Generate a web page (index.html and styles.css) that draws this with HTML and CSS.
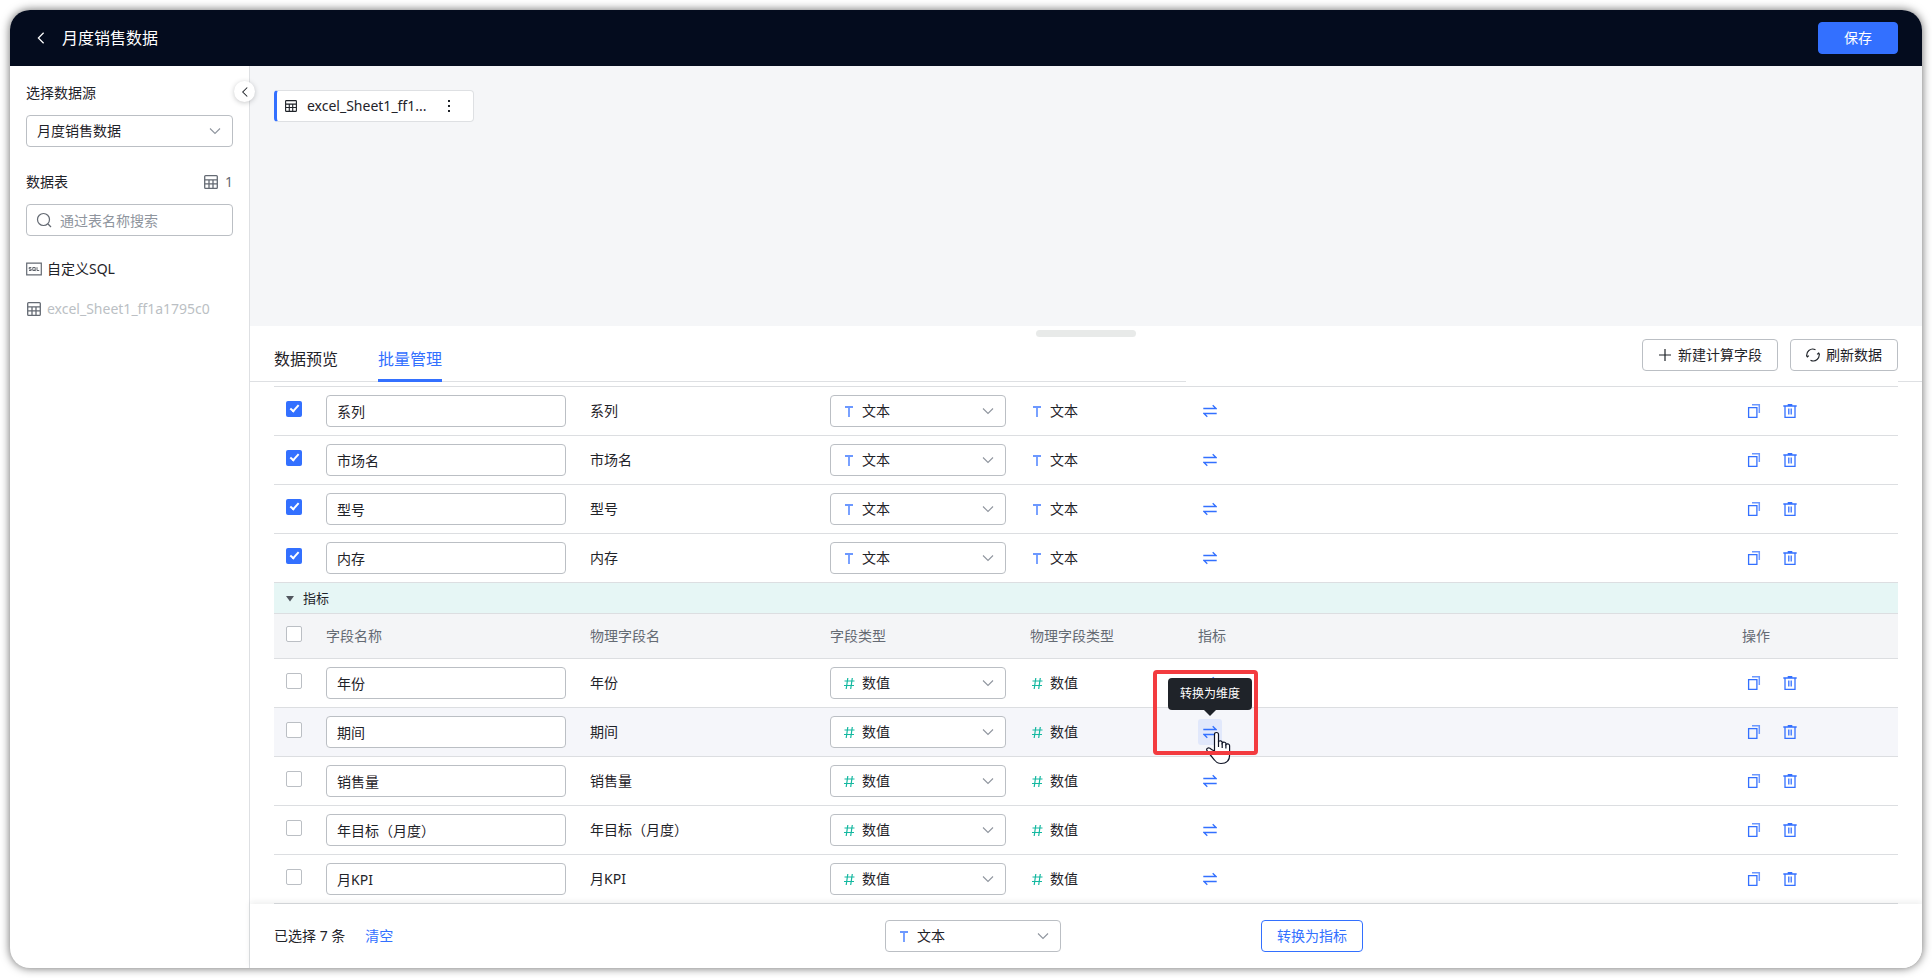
FILE: index.html
```html
<!DOCTYPE html>
<html lang="zh-CN">
<head>
<meta charset="utf-8">
<title>月度销售数据</title>
<link rel="stylesheet" href="styles.css">
</head>
<body>
<svg class="sprite" aria-hidden="true">
  <symbol id="i-down" viewBox="0 0 12 12"><path d="M1 3.5 6 8.5 11 3.5" fill="none" stroke="currentColor" stroke-width="1.1"/></symbol>
  <symbol id="i-left" viewBox="0 0 16 16"><path d="M11 2 5 8l6 6" fill="none" stroke="currentColor" stroke-width="1.4"/></symbol>
  <symbol id="i-table" viewBox="0 0 14 14"><path d="M1.6.7h10.8q.9 0 .9.9v10.8q0 .9-.9.9H1.6q-.9 0-.9-.9V1.6q0-.9.9-.9ZM.7 4.8h12.6M.7 8.8h12.6M5 4.8v8.5M9 4.8v8.5" fill="none" stroke="currentColor" stroke-width="1.3"/></symbol>
  <symbol id="i-text" viewBox="0 0 14 14"><path d="M3 3h8M7 3v10" fill="none" stroke="#6c98ff" stroke-width="1.8"/></symbol>
  <symbol id="i-num" viewBox="0 0 14 14"><path d="M5.800 2 4.200 13M10.300 2 8.700 13M2.500 5h10M2 9.500h10" fill="none" stroke="#14b8a0" stroke-width="1.200"/></symbol>
  <symbol id="i-swap" viewBox="0 0 14 14"><path d="M.3 4.500h12.700L9.700 1.300M13.700 9.500H1l3.300 3.200" fill="none" stroke="#3370ff" stroke-width="1.300"/></symbol>
  <symbol id="i-copy" viewBox="0 0 14 14"><path d="M1.600 3.600h8.300v9.700H1.600Z" fill="none" stroke="#3370ff" stroke-width="1.300"/><path d="M5 .8h7.300V9" fill="none" stroke="#6c98ff" stroke-width="1.500"/></symbol>
  <symbol id="i-trash" viewBox="0 0 14 14"><path d="M.3 2h13.400M4.700.7h4.600M2 2v11.300h10V2M5.800 4.500v6M8.200 4.500v6" fill="none" stroke="#3370ff" stroke-width="1.300"/></symbol>
</svg>

<div class="window">
  <header class="topbar">
    <button class="back" type="button" aria-label="返回"><svg width="14" height="16"><use href="#i-left"/></svg></button>
    <h1 class="title">月度销售数据</h1>
    <button class="btn btn-primary" type="button">保存</button>
  </header>

  <div class="body">
    <aside class="sidebar">
      <button class="collapse" type="button" aria-label="收起"><svg width="12" height="12"><use href="#i-left"/></svg></button>
      <label class="side-label" for="source">选择数据源</label>
      <div class="select">
        <select id="source"><option>月度销售数据</option></select>
        <svg class="caret" width="12" height="12"><use href="#i-down"/></svg>
      </div>
      <div class="side-head">
        <label for="search">数据表</label>
        <span class="count"><svg width="14" height="14"><use href="#i-table"/></svg>1</span>
      </div>
      <div class="search">
        <svg width="16" height="16" viewBox="0 0 16 16"><circle cx="7.500" cy="7.500" r="6" fill="none" stroke="#646a73" stroke-width="1.200"/><path d="m12 12 3 3" stroke="#646a73" stroke-width="1.300"/></svg>
        <input id="search" type="text" placeholder="通过表名称搜索">
      </div>
      <ul class="tables">
        <li>
          <svg width="16" height="14" viewBox="0 0 16 14"><path d="M.7 1.200h14.600v11.600H.7Z" fill="none" stroke="#646a73" stroke-width="1.200"/><path d="M5.300 5.500H3.200V7h2v1.500H3M6.800 5.500h2.400v3H6.800ZM8.300 7.600l1.200 1.500M11 5.200v3.300h2.200" fill="none" stroke="#51565e" stroke-width=".9"/></svg>
          自定义SQL
        </li>
        <li class="used">
          <svg width="16" height="14"><use href="#i-table"/></svg>
          excel_Sheet1_ff1a1795c0
        </li>
      </ul>
    </aside>

    <main class="main">
      <section class="canvas">
        <div class="node">
          <svg width="12" height="12"><use href="#i-table"/></svg>
          <span class="node-name">excel_Sheet1_ff1...</span>
          <button class="more" type="button" aria-label="更多"><svg width="4" height="14" viewBox="0 0 4 14"><path d="M1 1h2v2H1ZM1 6h2v2H1ZM1 11h2v2H1Z" fill="#1f2329"/></svg></button>
        </div>
      </section>

      <section class="panel">
        <div class="handle"></div>
        <div class="toolbar">
          <div class="tabs" role="tablist">
            <button class="tab" type="button" role="tab">数据预览</button>
            <button class="tab active" type="button" role="tab" aria-selected="true">批量管理</button>
          </div>
          <div class="actions">
            <button class="btn" type="button"><svg width="14" height="14" viewBox="0 0 14 14"><path d="M1 7h12M7 1v12" stroke="#1f2329" stroke-width="1.200"/></svg>新建计算字段</button>
            <button class="btn" type="button"><svg width="14" height="14" viewBox="0 0 14 14"><path d="M1.300 9A5.800 5.800 0 0 1 9.500 1.800M12.700 5A5.800 5.800 0 0 1 4.500 12.200M.2 7.200l1.200 1.800 1.500-1.300M13.800 6.800l-1.200-1.800-1.500 1.300" fill="none" stroke="#1f2329" stroke-width="1.100"/></svg>刷新数据</button>
          </div>
          <div class="toolbar-end"></div>
        </div>

        <div class="table-wrap">
          <table class="fields">
            <colgroup><col class="c-check"><col class="c-name"><col class="c-phys"><col class="c-type"><col class="c-ptype"><col><col class="c-ops"></colgroup>
            <tbody>
              <tr>
                <td class="check"><input type="checkbox" checked aria-label="选择系列"></td>
                <td><input class="field" type="text" value="系列" aria-label="字段名称"></td>
                <td>系列</td>
                <td><div class="select typed"><select aria-label="字段类型"><option>文本</option></select><svg class="kind" width="14" height="14"><use href="#i-text"/></svg><svg class="caret" width="12" height="12"><use href="#i-down"/></svg></div></td>
                <td><span class="ptype"><svg width="14" height="14"><use href="#i-text"/></svg>文本</span></td>
                <td><button class="icon-btn" type="button" aria-label="转换为指标"><svg width="14" height="14"><use href="#i-swap"/></svg></button></td>
                <td><div class="ops"><button class="icon-btn" type="button" aria-label="复制"><svg width="14" height="14"><use href="#i-copy"/></svg></button><button class="icon-btn" type="button" aria-label="删除"><svg width="14" height="14"><use href="#i-trash"/></svg></button></div></td>
              </tr>
              <tr>
                <td class="check"><input type="checkbox" checked aria-label="选择市场名"></td>
                <td><input class="field" type="text" value="市场名" aria-label="字段名称"></td>
                <td>市场名</td>
                <td><div class="select typed"><select aria-label="字段类型"><option>文本</option></select><svg class="kind" width="14" height="14"><use href="#i-text"/></svg><svg class="caret" width="12" height="12"><use href="#i-down"/></svg></div></td>
                <td><span class="ptype"><svg width="14" height="14"><use href="#i-text"/></svg>文本</span></td>
                <td><button class="icon-btn" type="button" aria-label="转换为指标"><svg width="14" height="14"><use href="#i-swap"/></svg></button></td>
                <td><div class="ops"><button class="icon-btn" type="button" aria-label="复制"><svg width="14" height="14"><use href="#i-copy"/></svg></button><button class="icon-btn" type="button" aria-label="删除"><svg width="14" height="14"><use href="#i-trash"/></svg></button></div></td>
              </tr>
              <tr>
                <td class="check"><input type="checkbox" checked aria-label="选择型号"></td>
                <td><input class="field" type="text" value="型号" aria-label="字段名称"></td>
                <td>型号</td>
                <td><div class="select typed"><select aria-label="字段类型"><option>文本</option></select><svg class="kind" width="14" height="14"><use href="#i-text"/></svg><svg class="caret" width="12" height="12"><use href="#i-down"/></svg></div></td>
                <td><span class="ptype"><svg width="14" height="14"><use href="#i-text"/></svg>文本</span></td>
                <td><button class="icon-btn" type="button" aria-label="转换为指标"><svg width="14" height="14"><use href="#i-swap"/></svg></button></td>
                <td><div class="ops"><button class="icon-btn" type="button" aria-label="复制"><svg width="14" height="14"><use href="#i-copy"/></svg></button><button class="icon-btn" type="button" aria-label="删除"><svg width="14" height="14"><use href="#i-trash"/></svg></button></div></td>
              </tr>
              <tr>
                <td class="check"><input type="checkbox" checked aria-label="选择内存"></td>
                <td><input class="field" type="text" value="内存" aria-label="字段名称"></td>
                <td>内存</td>
                <td><div class="select typed"><select aria-label="字段类型"><option>文本</option></select><svg class="kind" width="14" height="14"><use href="#i-text"/></svg><svg class="caret" width="12" height="12"><use href="#i-down"/></svg></div></td>
                <td><span class="ptype"><svg width="14" height="14"><use href="#i-text"/></svg>文本</span></td>
                <td><button class="icon-btn" type="button" aria-label="转换为指标"><svg width="14" height="14"><use href="#i-swap"/></svg></button></td>
                <td><div class="ops"><button class="icon-btn" type="button" aria-label="复制"><svg width="14" height="14"><use href="#i-copy"/></svg></button><button class="icon-btn" type="button" aria-label="删除"><svg width="14" height="14"><use href="#i-trash"/></svg></button></div></td>
              </tr>
            </tbody>
            <tbody>
              <tr class="group">
                <td colspan="7"><button class="group-toggle" type="button" aria-expanded="true"><svg width="8" height="8" viewBox="0 0 8 8"><path d="M0 2h8L4 7.500Z" fill="#51565e"/></svg>指标</button></td>
              </tr>
              <tr class="head">
                <th class="check"><input type="checkbox" aria-label="全选"></th>
                <th scope="col">字段名称</th>
                <th scope="col">物理字段名</th>
                <th scope="col">字段类型</th>
                <th scope="col">物理字段类型</th>
                <th scope="col">指标</th>
                <th scope="col">操作</th>
              </tr>
              <tr>
                <td class="check"><input type="checkbox" aria-label="选择年份"></td>
                <td><input class="field" type="text" value="年份" aria-label="字段名称"></td>
                <td>年份</td>
                <td><div class="select typed"><select aria-label="字段类型"><option>数值</option></select><svg class="kind" width="14" height="14"><use href="#i-num"/></svg><svg class="caret" width="12" height="12"><use href="#i-down"/></svg></div></td>
                <td><span class="ptype"><svg width="14" height="14"><use href="#i-num"/></svg>数值</span></td>
                <td><button class="icon-btn" type="button" aria-label="转换为维度"><svg width="14" height="14"><use href="#i-swap"/></svg></button></td>
                <td><div class="ops"><button class="icon-btn" type="button" aria-label="复制"><svg width="14" height="14"><use href="#i-copy"/></svg></button><button class="icon-btn" type="button" aria-label="删除"><svg width="14" height="14"><use href="#i-trash"/></svg></button></div></td>
              </tr>
              <tr class="hovered">
                <td class="check"><input type="checkbox" aria-label="选择期间"></td>
                <td><input class="field" type="text" value="期间" aria-label="字段名称"></td>
                <td>期间</td>
                <td><div class="select typed"><select aria-label="字段类型"><option>数值</option></select><svg class="kind" width="14" height="14"><use href="#i-num"/></svg><svg class="caret" width="12" height="12"><use href="#i-down"/></svg></div></td>
                <td><span class="ptype"><svg width="14" height="14"><use href="#i-num"/></svg>数值</span></td>
                <td>
                  <div class="hint">
                    <button class="icon-btn on" type="button" aria-label="转换为维度"><svg width="14" height="14"><use href="#i-swap"/></svg></button>
                    <span class="tooltip" role="tooltip">转换为维度</span>
                    <svg class="cursor" width="26" height="34" viewBox="0 0 26 34"><path d="M9.500 20V3.500Q9.500 1.500 11.500 1.500T13.500 3.500V11Q14 9.500 15.600 9.800T17.200 11.500V12Q18 10.800 19.600 11.300T20.900 13V13.500Q22 12.400 23.400 13T24.600 15V24Q24.600 32.500 16 32.500Q12 32.500 9.500 29L3 21Q.6 18 2.500 17.200T6.500 18.500Z" fill="#fff" stroke="#0d1224" stroke-width="1.200"/><path d="M13.500 10.500V16M17.200 12V17M20.900 13.500V17.500" stroke="#0d1224" stroke-width="1.200"/></svg>
                    <span class="callout"></span>
                  </div>
                </td>
                <td><div class="ops"><button class="icon-btn" type="button" aria-label="复制"><svg width="14" height="14"><use href="#i-copy"/></svg></button><button class="icon-btn" type="button" aria-label="删除"><svg width="14" height="14"><use href="#i-trash"/></svg></button></div></td>
              </tr>
              <tr>
                <td class="check"><input type="checkbox" aria-label="选择销售量"></td>
                <td><input class="field" type="text" value="销售量" aria-label="字段名称"></td>
                <td>销售量</td>
                <td><div class="select typed"><select aria-label="字段类型"><option>数值</option></select><svg class="kind" width="14" height="14"><use href="#i-num"/></svg><svg class="caret" width="12" height="12"><use href="#i-down"/></svg></div></td>
                <td><span class="ptype"><svg width="14" height="14"><use href="#i-num"/></svg>数值</span></td>
                <td><button class="icon-btn" type="button" aria-label="转换为维度"><svg width="14" height="14"><use href="#i-swap"/></svg></button></td>
                <td><div class="ops"><button class="icon-btn" type="button" aria-label="复制"><svg width="14" height="14"><use href="#i-copy"/></svg></button><button class="icon-btn" type="button" aria-label="删除"><svg width="14" height="14"><use href="#i-trash"/></svg></button></div></td>
              </tr>
              <tr>
                <td class="check"><input type="checkbox" aria-label="选择年目标（月度）"></td>
                <td><input class="field" type="text" value="年目标（月度）" aria-label="字段名称"></td>
                <td>年目标（月度）</td>
                <td><div class="select typed"><select aria-label="字段类型"><option>数值</option></select><svg class="kind" width="14" height="14"><use href="#i-num"/></svg><svg class="caret" width="12" height="12"><use href="#i-down"/></svg></div></td>
                <td><span class="ptype"><svg width="14" height="14"><use href="#i-num"/></svg>数值</span></td>
                <td><button class="icon-btn" type="button" aria-label="转换为维度"><svg width="14" height="14"><use href="#i-swap"/></svg></button></td>
                <td><div class="ops"><button class="icon-btn" type="button" aria-label="复制"><svg width="14" height="14"><use href="#i-copy"/></svg></button><button class="icon-btn" type="button" aria-label="删除"><svg width="14" height="14"><use href="#i-trash"/></svg></button></div></td>
              </tr>
              <tr>
                <td class="check"><input type="checkbox" aria-label="选择月KPI"></td>
                <td><input class="field" type="text" value="月KPI" aria-label="字段名称"></td>
                <td>月KPI</td>
                <td><div class="select typed"><select aria-label="字段类型"><option>数值</option></select><svg class="kind" width="14" height="14"><use href="#i-num"/></svg><svg class="caret" width="12" height="12"><use href="#i-down"/></svg></div></td>
                <td><span class="ptype"><svg width="14" height="14"><use href="#i-num"/></svg>数值</span></td>
                <td><button class="icon-btn" type="button" aria-label="转换为维度"><svg width="14" height="14"><use href="#i-swap"/></svg></button></td>
                <td><div class="ops"><button class="icon-btn" type="button" aria-label="复制"><svg width="14" height="14"><use href="#i-copy"/></svg></button><button class="icon-btn" type="button" aria-label="删除"><svg width="14" height="14"><use href="#i-trash"/></svg></button></div></td>
              </tr>
            </tbody>
          </table>
        </div>

        <footer class="batch">
          <div class="selected"><span>已选择 7 条</span><a href="#">清空</a></div>
          <div class="select typed batch-type"><select aria-label="批量字段类型"><option>文本</option></select><svg class="kind" width="14" height="14"><use href="#i-text"/></svg><svg class="caret" width="12" height="12"><use href="#i-down"/></svg></div>
          <div><button class="btn btn-outline" type="button">转换为指标</button></div>
        </footer>
      </section>
    </main>
  </div>
</div>
</body>
</html>
```

FILE: styles.css
```css
*, *::before, *::after { box-sizing: border-box; }

body {
  margin: 0;
  padding: 10px;
  min-height: 100vh;
  display: flex;
  background: #fff;
  color: #1f2329;
  font: 14px/22px "Noto Sans", "Noto Sans CJK SC", sans-serif;
}

svg { display: block; flex: none; }
.sprite { position: absolute; width: 0; height: 0; }

button, input, select {
  margin: 0;
  font: inherit;
  color: inherit;
}

button {
  padding: 0;
  border: 0;
  background: none;
  cursor: pointer;
}

.window {
  flex: 1;
  min-width: 0;
  display: flex;
  flex-direction: column;
  overflow: hidden;
  border-radius: 20px;
  background: #fff;
  box-shadow: 0 0 10px rgba(0, 0, 0, .6);
}

/* Top bar */
.topbar {
  display: flex;
  align-items: center;
  height: 56px;
  padding: 0 24px;
  background: #040c1e;
  color: #fff;
}
.title {
  flex: 1;
  margin: 0 0 0 14px;
  font-size: 16px;
  line-height: 24px;
  font-weight: 400;
}

.btn {
  display: inline-flex;
  align-items: center;
  justify-content: center;
  gap: 6px;
  height: 32px;
  padding: 0 15px;
  border: 1px solid #bbbfc4;
  border-radius: 4px;
  background: #fff;
  white-space: nowrap;
}
.btn-primary {
  min-width: 80px;
  border-color: #3370ff;
  background: #3370ff;
  color: #fff;
}
.btn-outline {
  border-color: #3370ff;
  color: #3370ff;
}

.body { flex: 1; display: flex; }

/* Sidebar */
.sidebar {
  position: relative;
  flex: none;
  width: 240px;
  padding: 16px;
  border-right: 1px solid #dee0e3;
}
.collapse {
  position: absolute;
  z-index: 2;
  top: 15px;
  right: -6px;
  display: flex;
  align-items: center;
  justify-content: center;
  width: 21px;
  height: 21px;
  border-radius: 50%;
  background: #fff;
  box-shadow: 0 1px 5px rgba(31, 35, 41, .25);
}
.side-label { display: block; margin-bottom: 11px; }
.side-head {
  display: flex;
  justify-content: space-between;
  align-items: center;
  margin: 24px 0 11px;
}
.count {
  display: flex;
  align-items: center;
  gap: 7px;
  color: #646a73;
}
.search { display: grid; align-items: center; }
.search > * { grid-area: 1 / 1; }
.search svg { z-index: 1; margin-left: 10px; }
.search input { padding-left: 33px; }
.search input::placeholder { color: #8f959e; opacity: 1; }
.tables {
  display: grid;
  gap: 18px;
  margin: 22px 0 0;
  padding: 0;
  list-style: none;
}
.tables li { display: flex; align-items: center; gap: 5px; }
.tables .used { color: #bbbfc4; }
.tables .used svg { color: #646a73; }

.field, .search input, .select select {
  width: 100%;
  height: 32px;
  border: 1px solid #bbbfc4;
  border-radius: 4px;
  background: #fff;
  outline: 0;
}
.field { display: block; padding: 0 10px; }

.select { display: grid; align-items: center; }
.select > * { grid-area: 1 / 1; }
.select select { padding: 0 32px 0 10px; appearance: none; }
.select .caret {
  justify-self: end;
  margin-right: 12px;
  color: #8f959e;
  pointer-events: none;
}
.typed select { padding-left: 31px; }
.kind { margin-left: 12px; pointer-events: none; }

/* Canvas */
.main { flex: 1; min-width: 0; display: flex; flex-direction: column; }
.canvas { height: 260px; padding: 24px; background: #f5f6f8; }
.node {
  display: flex;
  align-items: center;
  width: 200px;
  height: 32px;
  padding: 0 20px 0 8px;
  border: 1px solid #dee0e3;
  border-left: 3px solid #3370ff;
  border-radius: 4px;
  background: #fff;
}
.node-name { flex: 1; margin-left: 10px; white-space: nowrap; }
.more { padding: 0 2px; }

/* Panel */
.panel { position: relative; flex: 1; display: flex; flex-direction: column; }
.handle {
  position: absolute;
  top: 4px;
  left: 50%;
  width: 100px;
  height: 7px;
  margin-left: -50px;
  border-radius: 4px;
  background: #e8eae9;
}
.toolbar {
  display: grid;
  grid-template-columns: minmax(0, 1fr) 712px 24px;
  height: 56px;
}
.tabs {
  display: flex;
  gap: 40px;
  padding-left: 24px;
  border-bottom: 1px solid #dee0e3;
}
.tab {
  margin-bottom: -1px;
  padding-top: 12px;
  border-bottom: 3px solid transparent;
  font-size: 16px;
  line-height: 24px;
}
.tab.active { border-color: #3370ff; color: #3370ff; }
.actions {
  display: flex;
  justify-content: flex-end;
  gap: 12px;
  padding-top: 13px;
}
.toolbar-end { border-bottom: 1px solid #dee0e3; }

/* Field table */
.table-wrap { flex: 1; padding: 4px 24px 0; }
.fields {
  width: 100%;
  table-layout: fixed;
  border-collapse: separate;
  border-spacing: 0;
  border-top: 1px solid #dcdee1;
}
.c-check { width: 40px; }
.c-name { width: 264px; }
.c-phys { width: 240px; }
.c-type { width: 200px; }
.c-ptype, .c-ops { width: 168px; }
.fields td, .fields th {
  height: 49px;
  padding: 0 12px;
  border-bottom: 1px solid #dcdee1;
  text-align: left;
  font-weight: 400;
}
.fields .check { padding-bottom: 5px; }
.fields .group td { height: 31px; background: #e6f6f5; }
.fields .head th {
  height: 45px;
  background: #f4f5f7;
  color: #646a73;
}
.hovered td { background: #f5f6fa; }
.group-toggle {
  display: flex;
  align-items: center;
  gap: 9px;
  font-size: 13px;
}

input[type="checkbox"] {
  appearance: none;
  display: block;
  width: 16px;
  height: 16px;
  border: 1px solid #bbbfc4;
  border-radius: 2px;
  background: #fff;
}
input[type="checkbox"]:checked { border: 0; background: #3370ff; }
input[type="checkbox"]:checked::before {
  content: "";
  display: block;
  width: 5px;
  height: 9px;
  margin: 2px 0 0 6px;
  border: solid #fff;
  border-width: 0 2px 2px 0;
  transform: rotate(42deg);
}

.ptype { display: flex; align-items: center; gap: 6px; }
.icon-btn {
  display: flex;
  align-items: center;
  justify-content: center;
  width: 24px;
  height: 26px;
  border-radius: 3px;
}
.icon-btn.on { background: #e1e8fb; }
.ops { display: flex; gap: 12px; }

/* Hover hint on the swap action */
.hint { position: relative; width: 24px; }
.tooltip {
  position: absolute;
  z-index: 3;
  bottom: 35px;
  left: 50%;
  width: 84px;
  margin-left: -42px;
  border-radius: 4px;
  background: #1f2329;
  color: #fff;
  font-size: 12px;
  line-height: 32px;
  text-align: center;
}
.tooltip::after {
  content: "";
  position: absolute;
  top: 100%;
  left: 50%;
  margin-left: -6px;
  border: 6px solid transparent;
  border-top-color: #1f2329;
  border-bottom: 0;
}
.cursor { position: absolute; z-index: 3; top: 12px; left: 7px; }
.callout {
  position: absolute;
  z-index: 4;
  top: -49px;
  left: -45px;
  width: 105px;
  height: 85px;
  border: 4px solid #f33b3f;
  border-radius: 4px;
}

/* Batch footer */
.batch {
  position: relative;
  display: grid;
  grid-template-columns: 611fr 376fr 637fr;
  align-items: center;
  height: 64px;
  padding: 0 24px;
  background: #fff;
  box-shadow: 0 -2px 6px rgba(31, 35, 41, .08);
}
.selected { display: flex; gap: 20px; }
.selected a { color: #3370ff; text-decoration: none; }
.batch-type { width: 176px; }
```
